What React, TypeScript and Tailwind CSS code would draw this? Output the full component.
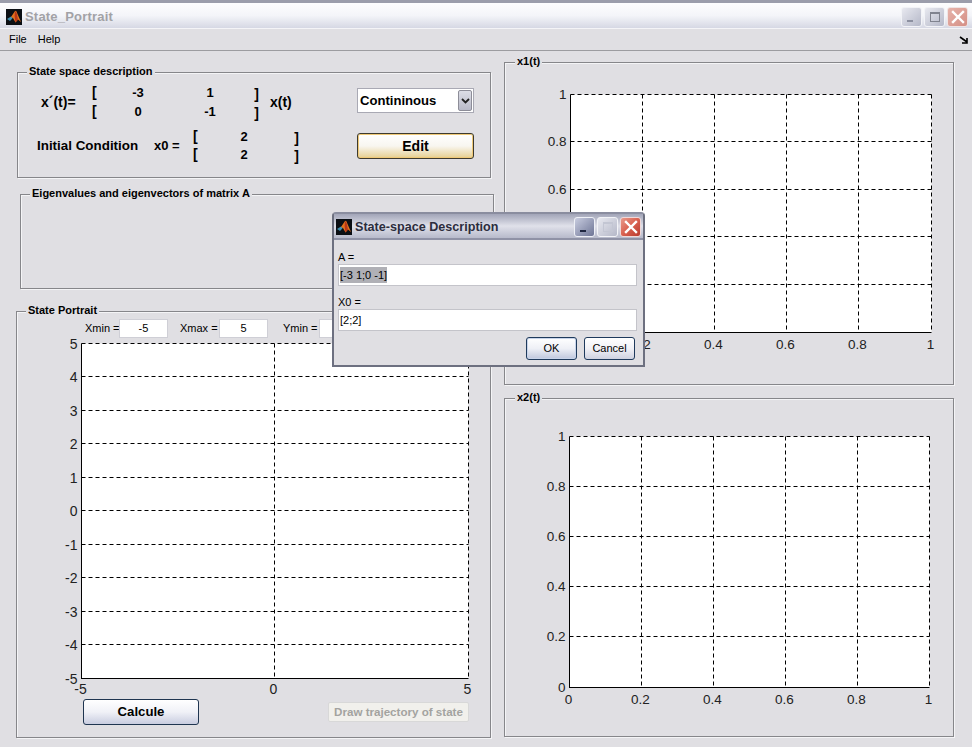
import React from "react";

const sans = "font-['Liberation_Sans',Arial,sans-serif]";

function Logo({ size }: { size: number }) {
  return (
    <svg width={size} height={size} viewBox="0 0 16 16" className="shrink-0">
      <rect width="16" height="16" fill="#0b0f14" />
      <path d="M1 10 L5 7.5 L7 8.8 L4 12 Z" fill="#3f8fb0" />
      <path d="M5 8 L9 2 Q10.5 1 11.5 5 L15 13 L12 10.5 L9.5 13.5 L7 9 Z" fill="#e2711d" />
      <path d="M9 2.5 Q10.5 2 11 6 L12 10.5 L9.5 13.5 L8.6 7 Z" fill="#b7371a" />
    </svg>
  );
}

function Panel({ title, className, titleClass, children }: { title: string; className: string; titleClass: string; children?: React.ReactNode }) {
  return (
    <div className={`relative border border-[#86868a] shadow-[1px_1px_0_#f4f4f6,inset_1px_1px_0_#f4f4f6] ${className}`}>
      <span className={`absolute top-[-9px] bg-[#e0dfe3] px-[2px] text-[11px] font-bold leading-[14px] text-black whitespace-nowrap ${titleClass}`}>{title}</span>
      {children}
    </div>
  );
}

type PlotProps = {
  w: number;
  h: number;
  xs: string[];
  ys: string[];
  fs: number;
  padL: number;
  padT: number;
  padR: number;
  padB: number;
  labelDy: number;
  className: string;
};

function Plot({ w, h, xs, ys, fs, padL, padT, padR, padB, labelDy, className }: PlotProps) {
  const vx = xs.map((_, i) => Math.floor((w * i) / (xs.length - 1)) + padL + 0.5);
  const hy = ys.map((_, i) => Math.floor((h * i) / (ys.length - 1)) + padT + 0.5);
  const left = padL + 0.5;
  const right = padL + w + 0.5;
  const top = padT + 0.5;
  const bottom = padT + h + 0.5;
  return (
    <svg width={padL + w + 1 + padR} height={padT + h + 1 + padB} className={`overflow-visible ${className}`}>
      <rect x={left} y={top} width={w} height={h} fill="#ffffff" />
      {vx.slice(1).map((x) => (
        <line key={x} x1={x} x2={x} y1={top} y2={bottom} stroke="#000" strokeDasharray="4 3" />
      ))}
      {hy.slice(0, -1).map((y) => (
        <line key={y} x1={left} x2={right} y1={y} y2={y} stroke="#000" strokeDasharray="4 3" />
      ))}
      <line x1={left} x2={left} y1={top} y2={bottom + 0.5} stroke="#000" />
      <line x1={left} x2={right} y1={bottom} y2={bottom} stroke="#000" />
      {ys.map((t, i) => (
        <text key={t} x={left - 4} y={hy[i] + fs * 0.36} textAnchor="end" fontSize={fs} fill="#222" fontFamily="Liberation Sans, Arial, sans-serif">
          {t}
        </text>
      ))}
      {xs.map((t, i) => (
        <text key={t} x={vx[i] - 1} y={bottom + labelDy} textAnchor="middle" fontSize={fs} fill="#222" fontFamily="Liberation Sans, Arial, sans-serif">
          {t}
        </text>
      ))}
    </svg>
  );
}

function WinButton({ kind, active }: { kind: "min" | "max" | "close"; active: boolean }) {
  const bg =
    kind === "close"
      ? active
        ? "bg-gradient-to-br from-[#e89a8c] via-[#d9604f] to-[#b83a30] border-[#f0d8d8]"
        : "bg-gradient-to-br from-[#e6b3ab] to-[#d58f85] border-[#efe4e4]"
      : kind === "min" && active
        ? "bg-gradient-to-br from-[#c9cde0] to-[#6f7696] border-[#eef0f6]"
        : "bg-gradient-to-br from-[#e8e9f0] to-[#b5b8c8] border-[#f2f3f7]";
  return (
    <div className={`flex h-[20px] w-[21px] items-center justify-center rounded-[3px] border ${bg}`}>
      {kind === "min" && <div className={`mt-[7px] mr-[3px] h-[2px] w-[6px] ${active ? "bg-[#1f2740]" : "bg-[#8c90a0]"}`} />}
      {kind === "max" && <div className={`h-[10px] w-[10px] border border-t-2 ${active ? "border-[#c3c6d3]" : "border-[#80838f]"}`} />}
      {kind === "close" && (
        <svg width="14" height="14" viewBox="0 0 14 14">
          <path d="M2 2 L12 12 M12 2 L2 12" stroke="#fff" strokeWidth="2.4" strokeLinecap="square" />
        </svg>
      )}
    </div>
  );
}

function Matrix({ rows, cols, rowH }: { rows: string[][]; cols: string; rowH: string }) {
  return (
    <div className={`mt-[1px] grid ${cols} ${rowH} text-[13px] font-bold leading-[18px]`}>
      {rows.map((r, i) => (
        <React.Fragment key={i}>
          <div className="mt-[-1px] text-left text-[14px]">[</div>
          {r.map((v, j) => (
            <div key={j} className="text-center">{v}</div>
          ))}
          <div className="mt-[1px] text-right text-[14px]">]</div>
        </React.Fragment>
      ))}
    </div>
  );
}

export default function App() {
  return (
    <div className={`relative flex h-[747px] w-[972px] flex-col overflow-hidden bg-[#e0dfe3] text-black ${sans}`}>
      {/* window title */}
      <div className="flex h-[29px] shrink-0 items-center border-t-[3px] border-[#9b9dab] bg-gradient-to-b from-[#fdfdfe] via-[#f4f5f9] to-[#d6d8e4] pl-[6px] pr-[4px] pt-[3px] border-b border-b-[#f4f4f7]">
        <Logo size={16} />
        <span className="ml-[3px] text-[13px] font-bold tracking-[0.2px] text-[#a2a2a6]">State_Portrait</span>
        <div className="ml-auto flex gap-[2px]">
          <WinButton kind="min" active={false} />
          <WinButton kind="max" active={false} />
          <WinButton kind="close" active={false} />
        </div>
      </div>

      {/* menu */}
      <div className="flex h-[22px] shrink-0 items-center border-b border-[#9c9ca0] pl-[9px] pr-[3px] text-[11px]">
        <span>File</span>
        <span className="ml-[11px]">Help</span>
        <svg width="10" height="8" viewBox="0 0 10 8" className="ml-auto">
          <path d="M1 1 L8 6 M8 2 V7 H3" stroke="#000" strokeWidth="1.6" fill="none" />
        </svg>
      </div>

      {/* body */}
      <div className="flex pl-[16px]">
        <div className="flex w-[478px] flex-col">
          <Panel title="State space description" className="ml-px mt-[21px] flex h-[106px] w-[474px]" titleClass="left-[9px]">
            <div className="w-[339px] shrink-0 pt-[10px]">
              <div className="flex h-[38px] items-center">
                <div className="ml-[23px] w-[51px] text-[14px] font-bold">x´(t)=</div>
                <Matrix rows={[["-3", "1"], ["0", "-1"]]} cols="grid-cols-[6px_80px_64px_17px]" rowH="auto-rows-[19px]" />
                <div className="ml-[11px] text-[14px] font-bold">x(t)</div>
              </div>
              <div className="mt-[6px] flex h-[36px] items-center">
                <div className="ml-[19px] mt-[2px] w-[117px] text-[13.4px] font-bold">Initial Condition</div>
                <div className="mt-[2px] w-[39px] text-[13px] font-bold">x0 =</div>
                <Matrix rows={[["2"], ["2"]]} cols="grid-cols-[5px_92px_9px]" rowH="auto-rows-[18px]" />
              </div>
            </div>
            <div className="flex w-[117px] flex-col gap-[20px] pt-[15px]">
              <div className="flex h-[25px] items-center border border-[#a9a9b4] bg-white pl-[2px] pr-[1px] text-[13.1px] font-bold">
                <span>Contininous</span>
                <div className="ml-auto flex h-[21px] w-[14px] items-center justify-center rounded-[2px] border border-[#8d8d98] bg-gradient-to-b from-[#dcdde6] to-[#b9bac8]">
                  <svg width="9" height="6" viewBox="0 0 9 6">
                    <path d="M1 1 L4.5 4.5 L8 1" stroke="#222" strokeWidth="1.8" fill="none" />
                  </svg>
                </div>
              </div>
              <div className="flex h-[26px] items-center justify-center rounded-[3px] border border-[#3d3a2e] bg-gradient-to-b from-[#ffffff] via-[#f8f6f0] to-[#e6cf8f] text-[14px] font-bold shadow-[inset_0_0_0_1px_#efc978]">
                Edit
              </div>
            </div>
          </Panel>

          <Panel title="Eigenvalues and eigenvectors of matrix A" className="ml-[4px] mt-[16px] h-[95px] w-[474px]" titleClass="left-[9px]" />

          <Panel title="State Portrait" className="mt-[22px] h-[427px] w-[475px]" titleClass="left-[9px]">
            <div className="flex h-[26px] items-start pl-[68px] pt-[7px] text-[11px] leading-[19px]">
              <span className="w-[34px] whitespace-nowrap">Xmin =</span>
              <div className="flex h-[19px] w-[49px] items-center justify-center border border-[#cfcfd6] bg-white">-5</div>
              <span className="ml-[12px] w-[39px] whitespace-nowrap">Xmax =</span>
              <div className="flex h-[19px] w-[49px] items-center justify-center border border-[#cfcfd6] bg-white">5</div>
              <span className="ml-[15px] w-[36px] whitespace-nowrap">Ymin =</span>
              <div className="h-[19px] w-[49px] border border-[#cfcfd6] bg-white" />
            </div>
            <Plot
              w={387}
              h={335}
              xs={["-5", "0", "5"]}
              ys={["5", "4", "3", "2", "1", "0", "-1", "-2", "-3", "-4", "-5"]}
              fs={14}
              padL={30}
              padT={5}
              padR={10}
              padB={20}
              labelDy={15}
              className="ml-[34px]"
            />
            <div className="flex items-start">
              <div className="ml-[66px] flex h-[26px] w-[116px] items-center justify-center rounded-[3px] border border-[#1f3550] bg-gradient-to-b from-[#ffffff] via-[#f0f1f7] to-[#c9cde0] text-[13.2px] font-bold">
                Calcule
              </div>
              <div className="ml-[129px] mt-[3px] flex h-[20px] w-[141px] items-center justify-center rounded-[2px] border border-[#d8d8d8] bg-[#f1f0ec] text-[11.6px] font-bold text-[#a3a3a0]">
                Draw trajectory of state
              </div>
            </div>
          </Panel>
        </div>

        <div className="ml-[10px] flex w-[450px] flex-col">
          <Panel title="x1(t)" className="mt-[11px] h-[323px] w-[450px] pt-[21px]" titleClass="left-[10px]">
            <Plot
              w={361}
              h={238}
              xs={["0", "0.2", "0.4", "0.6", "0.8", "1"]}
              ys={["1", "0.8", "0.6", "0.4", "0.2", "0"]}
              fs={13.5}
              padL={40}
              padT={10}
              padR={10}
              padB={20}
              labelDy={16}
              className="ml-[25px]"
            />
          </Panel>
          <Panel title="x2(t)" className="mt-[13px] h-[339px] w-[450px] pt-[27px]" titleClass="left-[10px]">
            <Plot
              w={360}
              h={251}
              xs={["0", "0.2", "0.4", "0.6", "0.8", "1"]}
              ys={["1", "0.8", "0.6", "0.4", "0.2", "0"]}
              fs={13.5}
              padL={40}
              padT={10}
              padR={10}
              padB={20}
              labelDy={16}
              className="ml-[24px]"
            />
          </Panel>
        </div>
      </div>

      {/* modal dialog */}
      <div className="absolute left-[332px] top-[212px] flex h-[155px] w-[313px] flex-col rounded-t-[4px] border-2 border-[#6d7080] bg-[#e0dfe3] border-t-[#8a8d9f]">
        <div className="flex h-[26px] shrink-0 items-center border-b-2 border-[#8f92a6] bg-gradient-to-b from-[#a2a5b8] via-[#e0e1ea] to-[#b7bacb] pl-[2px] pr-[2px] pt-[2px]">
          <Logo size={16} />
          <span className="ml-[3px] text-[12.6px] font-bold text-[#2c2d3d]">State-space Description</span>
          <div className="ml-auto flex gap-[2px]">
            <WinButton kind="min" active />
            <WinButton kind="max" active />
            <WinButton kind="close" active />
          </div>
        </div>
        <div className="flex flex-col pl-[4px] pr-[6px] text-[11px]">
          <div className="mt-[11px] h-[13px] leading-[13px]">A =</div>
          <div className="flex h-[22px] items-center border border-[#c4c4ca] bg-white pl-px">
            <span className="bg-[#b0b0b6]">[-3 1;0 -1]</span>
          </div>
          <div className="mt-[10px] h-[13px] leading-[13px]">X0 =</div>
          <div className="flex h-[22px] items-center border border-[#c4c4ca] bg-white pl-px">[2;2]</div>
          <div className="mt-[6px] flex justify-end gap-[7px] pr-[2px]">
            <div className="flex h-[23px] w-[51px] items-center justify-center rounded-[3px] border border-[#1f3a5c] bg-gradient-to-b from-[#ffffff] via-[#eef0f6] to-[#bfc7dd] shadow-[inset_0_0_0_1px_#c8d4ea]">OK</div>
            <div className="flex h-[23px] w-[51px] items-center justify-center rounded-[3px] border border-[#1f3a5c] bg-gradient-to-b from-[#ffffff] via-[#f1f1f6] to-[#cfd2e0]">Cancel</div>
          </div>
        </div>
      </div>
    </div>
  );
}
